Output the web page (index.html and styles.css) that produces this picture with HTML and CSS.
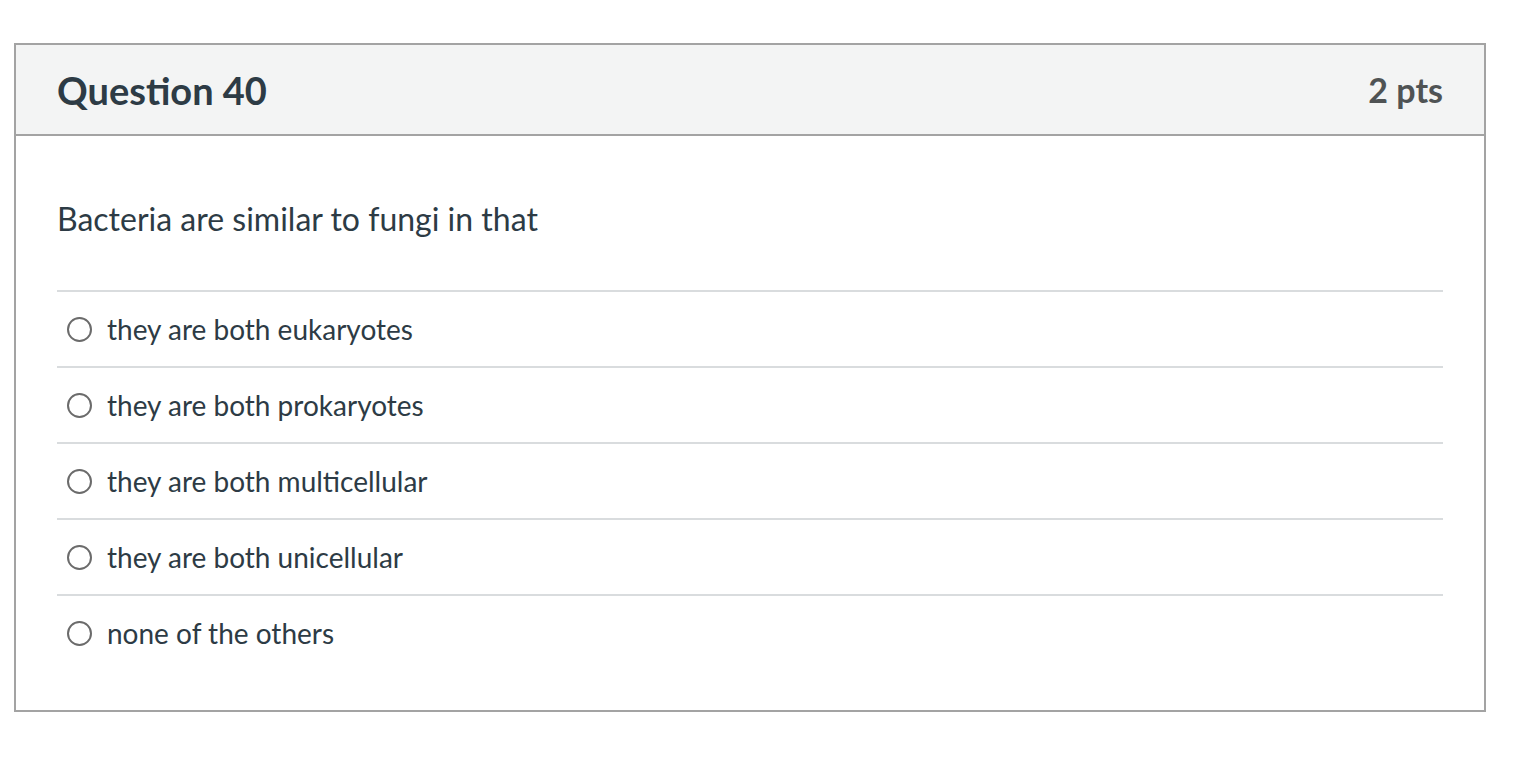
FILE: index.html
```html
<!DOCTYPE html>
<html lang="en">
<head>
<meta charset="utf-8">
<title>Question 40</title>
<link rel="stylesheet" href="styles.css">
</head>
<body>
<div class="question">
  <div class="q-header">
    <h2 class="q-title">Question 40</h2>
    <span class="q-points">2 pts</span>
  </div>
  <div class="q-body">
    <p class="q-text">Bacteria are similar to fungi in that</p>
    <div class="answers">
      <label class="answer"><span class="radio"></span><span class="answer-text">they are both eukaryotes</span></label>
      <label class="answer"><span class="radio"></span><span class="answer-text">they are both prokaryotes</span></label>
      <label class="answer"><span class="radio"></span><span class="answer-text">they are both multicellular</span></label>
      <label class="answer"><span class="radio"></span><span class="answer-text">they are both unicellular</span></label>
      <label class="answer"><span class="radio"></span><span class="answer-text">none of the others</span></label>
    </div>
  </div>
</div>
</body>
</html>
```
FILE: styles.css
```css
html, body {
  margin: 0;
  padding: 0;
  background: #ffffff;
}
body {
  font-family: Lato, "Noto Sans", sans-serif;
  color: #2d3b45;
  padding: 43px 36px 0 14px;
}
.question {
  border: 2px solid #a3a3a3;
  width: 1472px;
  box-sizing: border-box;
}
.q-header {
  display: flex;
  align-items: center;
  justify-content: space-between;
  background: #f3f4f4;
  border-bottom: 2px solid #a3a3a3;
  height: 91px;
  box-sizing: border-box;
  padding: 0 41px 0 41px;
}
.q-title {
  margin: 0;
  font-size: 38px;
  font-weight: 700;
  color: #2d3b45;
}
.q-points {
  font-size: 34px;
  font-weight: 700;
  color: #4f5354;
}
.q-body {
  padding: 0 41px 40px 41px;
}
.q-text {
  margin: 0;
  padding: 64px 0 52px;
  font-size: 32px;
  line-height: 38px;
  color: #2d3b45;
}
.answers {
  display: flex;
  flex-direction: column;
}
.answer {
  display: flex;
  align-items: center;
  height: 76px;
  border-top: 2px solid #d9dcde;
  box-sizing: border-box;
  padding-left: 10px;
  font-size: 28px;
  color: #2d3b45;
}
.radio {
  width: 25px;
  height: 25px;
  border: 2px solid #6b6b6b;
  border-radius: 50%;
  box-sizing: border-box;
  margin-right: 15px;
  flex: none;
}
.answer-text {
  line-height: 32px;
}
```
